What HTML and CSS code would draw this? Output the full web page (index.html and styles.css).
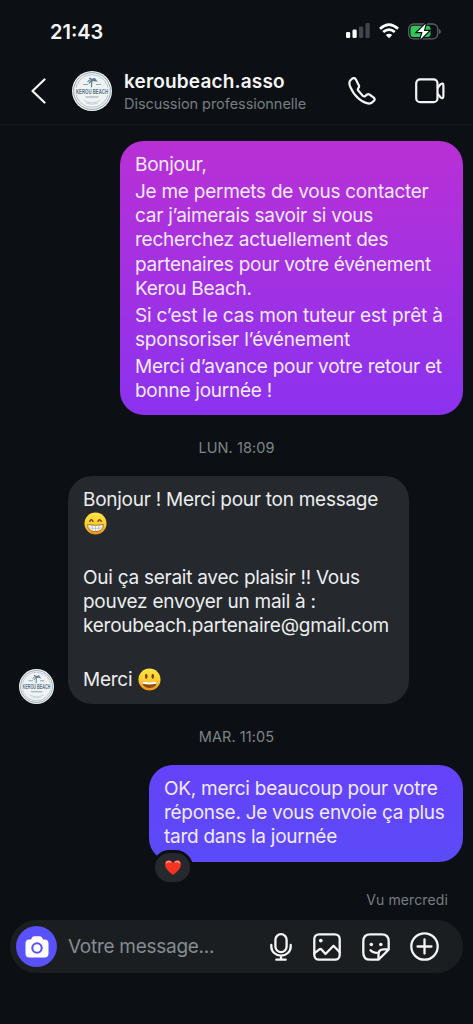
FILE: index.html
```html
<!DOCTYPE html>
<html lang="fr">
<head>
<meta charset="utf-8">
<meta name="viewport" content="width=device-width, initial-scale=1">
<title>keroubeach.asso</title>
<link rel="stylesheet" href="styles.css">
</head>
<body>
<svg width="0" height="0" class="defs" aria-hidden="true">
  <defs>
    <linearGradient id="face" x1="0" y1="0" x2="0" y2="1"><stop offset="0" stop-color="#ffe54a"/><stop offset=".6" stop-color="#fdc928"/><stop offset="1" stop-color="#ed8f10"/></linearGradient>
    <symbol id="logo" viewBox="0 0 40 40">
      <circle cx="20" cy="20" r="20" fill="#f1f2f3"/>
      <circle cx="20" cy="20" r="18.4" fill="none" stroke="#7895a8" stroke-width=".8"/>
      <circle cx="20" cy="20" r="16.4" fill="none" stroke="#9fb3c0" stroke-width=".7"/>
      <path d="M19.5 16.5l.3-7.5M15.5 11q2-3 4.5-2 3-1.5 4.5 1-2.500-.6-4.500-.6-2 1-3 3M20 9q-1-2-3-1.500M20 9q1.500-2 3.500-1" fill="none" stroke="#55798f" stroke-width="1.100"/>
      <path d="M11 13.500h5M24 13.500h5M13.500 26h13" stroke="#8ea6b5" stroke-width="1.200"/>
      <path d="M12 29.500q8 4.500 16 0M14 32q6 2.500 12 0" stroke="#b4c3cc" stroke-width=".7" fill="none"/>
      <rect x="3" y="16.500" width="34" height="7.500" fill="#f1f2f3"/>
      <text x="20" y="23" text-anchor="middle" textLength="32" lengthAdjust="spacingAndGlyphs" class="logo-text">KEROU BEACH</text>
    </symbol>
  </defs>
</svg>
<div class="phone">
  <div class="status">
    <span class="time">21:43</span>
    <div class="status-icons">
      <svg class="signal" width="25" height="16" viewBox="0 0 25 16"><rect x="0" y="9" width="4.200" height="6" rx="1.300" fill="#fff"/><rect x="6.500" y="6.500" width="4.200" height="8.500" rx="1.300" fill="#fff"/><rect x="13" y="3.500" width="4.200" height="11.500" rx="1.300" fill="#414548"/><rect x="19.500" y="0" width="4.200" height="15" rx="1.300" fill="#414548"/></svg>
      <svg class="wifi" width="20" height="16" viewBox="0 0 20 16" fill="none" stroke="#fff" stroke-width="2.700"><path d="M1 5.700Q10-2.500 19 5.700M4.200 9.100Q10 4 15.800 9.100"/><path d="M10 15.300l-3.200-3.200q3.200-2.600 6.400 0z" fill="#fff" stroke="none"/></svg>
      <svg class="battery" width="34" height="17" viewBox="0 0 34 17"><rect x=".7" y="1" width="29" height="14.800" rx="4.800" fill="none" stroke="#5b6063" stroke-width="1.300"/><path d="M31 6v5q1.800-.5 1.800-2.500T31 6z" fill="#5b6063"/><rect x="2.500" y="2.800" width="20" height="11.200" rx="3" fill="#32c759"/><path d="M17.700.7L9.300 9h5.300l-2.300 7.600L20.800 8h-5z" fill="#fff" stroke="#0c1014" stroke-width="2.400" paint-order="stroke"/></svg>
    </div>
  </div>
  <header class="header">
    <svg class="back" width="15" height="26" viewBox="0 0 15 26"><path d="M13.500 1.500L1.500 13l12 11.500" fill="none" stroke="#f5f5f5" stroke-width="2.200" stroke-linecap="round" stroke-linejoin="round"/></svg>
    <svg class="avatar" viewBox="0 0 40 40"><use href="#logo"/></svg>
    <div class="who"><h1>keroubeach.asso</h1><p>Discussion professionnelle</p></div>
    <svg class="phone-icon" width="28" height="28" viewBox="0 0 28 28"><path d="M4.100 1.700L2 3.700Q.6 6.300 2.400 10.200 5.300 17.200 10.700 21.700 16.200 26.300 21.300 26.600 23.600 26.600 26 23.800 27.400 22 25.800 20.600L21.400 17.500Q20 16.700 18.600 17.800L16.800 19.300Q15.800 19.700 14.700 18.700L10.200 13.600Q9.400 12.500 10.200 11.400 11.600 10 10.800 8.300L7.900 2.500Q6.400.2 4.100 1.700Z" fill="none" stroke="#f5f5f5" stroke-width="2.200" stroke-linejoin="round"/></svg>
    <svg class="video-icon" width="30" height="26" viewBox="0 0 30 26" fill="none" stroke="#f5f5f5" stroke-width="2.200" stroke-linejoin="round"><rect x="1.200" y="1.400" width="21.300" height="22.800" rx="4"/><path d="M22.500 10L25.500 6.300Q28.400 4.200 28.400 7.700V17.900Q28.400 21.400 25.500 19.300L22.500 15.600"/></svg>
  </header>
  <main class="chat">
    <div class="bubble sent first">
      <p>Bonjour,</p>
      <p>Je me permets de vous contacter<br>car j’aimerais savoir si vous<br>recherchez actuellement des<br>partenaires pour votre événement<br>Kerou Beach.</p>
      <p class="snug">Si c’est le cas mon tuteur est prêt à<br>sponsoriser l’événement</p>
      <p>Merci d’avance pour votre retour et<br>bonne journée !</p>
    </div>
    <div class="stamp">LUN. 18:09</div>
    <div class="incoming">
      <svg class="avatar-small" viewBox="0 0 40 40"><use href="#logo"/></svg>
      <div class="bubble received">
        <p>Bonjour ! Merci pour ton message<br><svg class="emoji grin" viewBox="0 0 24 24"><circle cx="12" cy="12" r="11.500" fill="url(#face)"/><path d="M6 9.700q1.700-3.200 3.400 0M14.600 9.700q1.700-3.200 3.400 0" fill="none" stroke="#704210" stroke-width="1.500" stroke-linecap="round"/><path d="M3.700 13.200q8.300 1.500 16.600 0-.4 7.300-8.300 7.300t-8.300-7.300z" fill="#f9fafa" stroke="#8b5a18" stroke-width=".8"/><path d="M4.500 16.600q7.500 1.200 15 0M8.500 14v6M12 14v6M15.500 14v6" fill="none" stroke="#9da4a7" stroke-width=".6"/></svg></p>
        <p class="blank"></p>
        <p>Oui ça serait avec plaisir !! Vous<br>pouvez envoyer un mail à :<br>keroubeach.partenaire@gmail.com</p>
        <p class="blank"></p>
        <p>Merci <svg class="emoji smile" viewBox="0 0 24 24"><circle cx="12" cy="12" r="11.500" fill="url(#face)"/><ellipse cx="8.600" cy="8.600" rx="1.300" ry="2.700" fill="#704210"/><ellipse cx="15.400" cy="8.600" rx="1.300" ry="2.700" fill="#704210"/><path d="M4 14q8 1.500 16 0-.6 6.800-8 6.800T4 14z" fill="#8b4b0c"/><path d="M4.300 14q7.700 1.500 15.400 0l-.4 2.500q-7.300 1.300-14.600 0z" fill="#fff"/></svg></p>
      </div>
    </div>
    <div class="stamp second">MAR. 11:05</div>
    <div class="bubble sent last">
      <p>OK, merci beaucoup pour votre<br>réponse. Je vous envoie ça plus<br>tard dans la journée</p>
      <span class="reaction"><svg width="18" height="17" viewBox="0 0 19 17"><path d="M9.500 16.500Q1 10.500 1 5.200 1 1 4.700.8 7.900.6 9.500 3.500 11.100.6 14.300.8 18 1 18 5.200 18 10.500 9.500 16.500z" fill="#f43322"/><path d="M2.800 3.400Q4.500 1.400 7 2.900M12 2.900Q14.500 1.400 16.200 3.400" stroke="#ff9b91" stroke-width="1.500" fill="none" stroke-linecap="round"/></svg></span>
    </div>
    <div class="seen">Vu mercredi</div>
  </main>
  <footer class="composer">
    <span class="camera"><svg width="24" height="22" viewBox="0 0 24 22"><path d="M4.500 3.500H6Q7.200.3 9 .3h6q1.800 0 3 3.200h1.500Q23.500 3.500 23.500 7.500V17.500Q23.500 21.500 19.500 21.500H4.500Q.5 21.500.5 17.500V7.500Q.5 3.500 4.500 3.500z" fill="#fff"/><circle cx="12" cy="12" r="4.700" fill="none" stroke="#5852f8" stroke-width="2.100"/></svg></span>
    <span class="placeholder">Votre message...</span>
    <div class="tools">
      <svg class="mic" width="22" height="28" viewBox="0 0 22 28"><rect x="5.400" y="1.200" width="11.200" height="18" rx="5.600"/><path d="M1.300 12v1.500a9.700 9.200 0 0 0 19.400 0V12M11 22.700v4M6.300 26.700h9.400"/></svg>
      <svg width="28" height="28" viewBox="0 0 28 28"><rect x="1.300" y="1.300" width="25.400" height="25.400" rx="4.700"/><path d="M1.500 20.200L6.400 16.300Q7.500 15.600 8.500 16.600L12.500 21 20.500 12.800 26.500 19"/><circle cx="7.800" cy="7.600" r="1.900" class="dot"/></svg>
      <svg width="28" height="28" viewBox="0 0 28 28"><path d="M16.500 26.700H8.300Q1.300 26.700 1.300 19.700V8.300Q1.300 1.300 8.300 1.300H19.700Q26.700 1.300 26.700 8.300V16.500Q22 21.500 16.500 26.700zM16.500 26.500V21.500Q16.500 16.400 21.500 16.400H26.500M8.500 17.300Q11.500 20.800 16.600 19.500"/><circle cx="9.300" cy="11.500" r="1.800" class="dot"/><circle cx="18.800" cy="11.500" r="1.800" class="dot"/></svg>
      <svg width="29" height="29" viewBox="0 0 29 29"><circle cx="14.500" cy="14.500" r="13.200"/><path d="M14.500 7.500v14M7.500 14.500h14"/></svg>
    </div>
  </footer>
</div>
</body>
</html>
```
FILE: styles.css
```css
* { box-sizing: border-box; }
body { margin: 0; background: #0c1014; font-family: Inter, "Liberation Sans", sans-serif; color: #f5f5f5; }
h1, p { margin: 0; }
.defs { position: absolute; }
svg { flex: none; }
.phone { width: 473px; height: 1024px; display: flex; flex-direction: column; overflow: hidden; }
.status { height: 62px; flex: none; padding: 0 31px 0 50px; display: flex; align-items: center; justify-content: space-between; }
.time { font-size: 20px; font-weight: 600; line-height: 24px; padding-top: 1px; }
.status-icons { display: flex; align-items: center; }
.wifi { margin-left: 8px; }
.battery { margin-left: 9px; }
.header { height: 63px; flex: none; border-bottom: 1px solid #171b20; padding: 0 28px 5px 31px; display: flex; align-items: center; }
.avatar { width: 40px; height: 40px; margin-left: 26px; }
.logo-text { font: 700 7.5px "Liberation Sans", sans-serif; fill: #547589; }
.who { margin-left: 12px; padding-top: 3px; flex: 1; white-space: nowrap; }
.who h1 { font-size: 19px; line-height: 23px; font-weight: 600; letter-spacing: .17px; }
.who p { font-size: 14.500px; line-height: 21px; letter-spacing: -.05px; color: #777c80; }
.video-icon { margin-left: 39px; }
.chat { flex: 1; display: flex; flex-direction: column; padding: 16px 10px 0; }
.bubble { padding: 12px 15px; border-radius: 24px; font-size: 19px; line-height: 24.300px; letter-spacing: -.26px; white-space: nowrap; }
.bubble p + p { margin-top: 2.400px; }
.sent { align-self: flex-end; color: #f3eaff; }
.first { width: 343px; height: 274px; background: linear-gradient(#b930d5, #8b32ef); }
.snug { letter-spacing: -.18px; }
.stamp { height: 61px; line-height: 66px; text-align: center; font-size: 14.500px; letter-spacing: .08px; color: #7e8387; }
.incoming { display: flex; align-items: flex-end; padding-left: 9px; }
.avatar-small { width: 35px; height: 35px; }
.received { width: 341px; height: 228px; margin-left: 14px; background: #25292d; color: #ecedee; }
.blank { height: 24.300px; }
.emoji { width: 23px; height: 23px; vertical-align: -5px; }
.grin { margin-left: 1px; }
.smile { margin-left: 1px; }
.second { height: 60.500px; }
.last { position: relative; width: 314px; height: 97px; background: linear-gradient(#6542fa, #5b4bf8); letter-spacing: -.27px; }
.reaction { position: absolute; left: 3px; top: 85px; width: 41px; height: 35px; border: 3px solid #0c1014; border-radius: 18px; background: #25292d; display: flex; align-items: center; justify-content: center; }
.seen { margin: 28px 15px 0 0; text-align: right; font-size: 14px; line-height: 20px; letter-spacing: .12px; color: #777c80; }
.composer { height: 53px; flex: none; margin: 0 10px 51px; border-radius: 27px; background: #1b1e21; padding: 0 24px 0 6px; display: flex; align-items: center; }
.camera { width: 41px; height: 41px; border-radius: 50%; background: #5852f8; display: flex; align-items: center; justify-content: center; }
.placeholder { flex: 1; margin-left: 11px; font-size: 19px; letter-spacing: -.28px; color: #858c93; white-space: nowrap; }
.tools { display: flex; align-items: center; gap: 20.300px; }
.mic { margin-right: 1.200px; }
.tools svg { fill: none; stroke: #f5f5f5; stroke-width: 2.300; stroke-linecap: round; stroke-linejoin: round; }
.tools .dot { fill: #f5f5f5; stroke: none; }
```
